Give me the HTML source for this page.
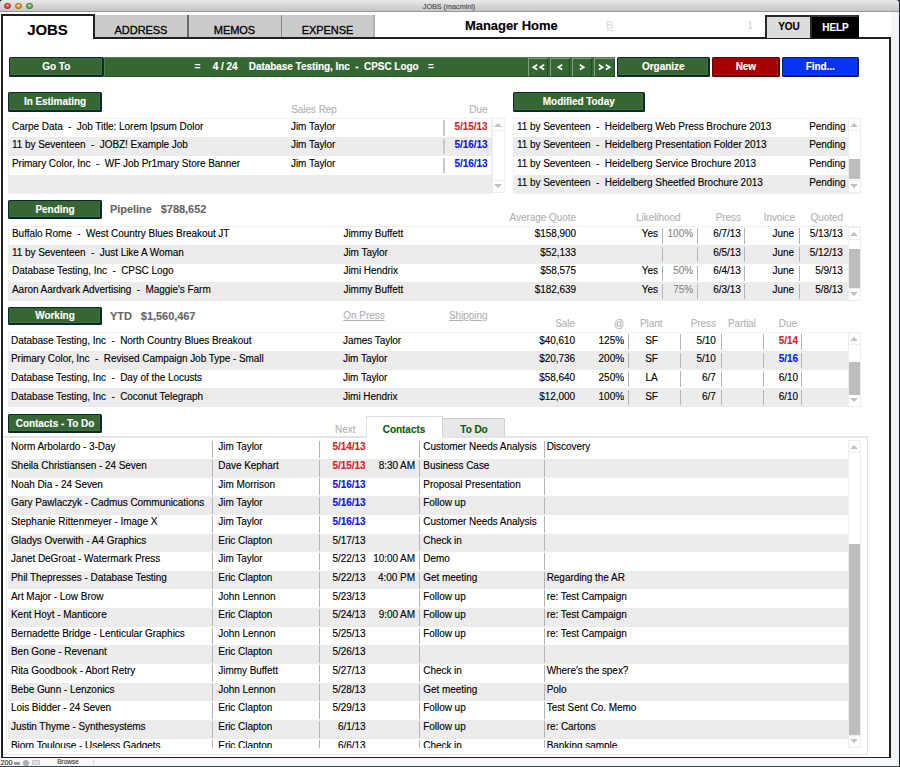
<!DOCTYPE html><html><head><meta charset="utf-8"><style>
html,body{margin:0;padding:0;}
body{width:900px;height:767px;position:relative;overflow:hidden;background:#fff;font-family:"Liberation Sans",sans-serif;}
.t{position:absolute;white-space:pre;-webkit-text-stroke:0.12px currentColor;letter-spacing:-0.05px;}
.r{position:absolute;}
</style></head><body>
<div class="r" style="left:0.00px;top:0.00px;width:900.00px;height:767.00px;background:#fff;"></div>
<div class="r" style="left:899.00px;top:0.00px;width:1.00px;height:767.00px;background:#0f2638;"></div>
<div class="r" style="left:891.00px;top:12.00px;width:8.00px;height:746.00px;background:#f4f4f4;"></div>
<div class="r" style="left:0.00px;top:0.00px;width:4.00px;height:4.00px;background:#1a2530;"></div>
<div class="r" style="left:895.00px;top:0.00px;width:4.00px;height:4.00px;background:#1a2530;"></div>
<div class="r" style="left:0.00px;top:0.00px;width:899.00px;height:11.30px;background:linear-gradient(#e9e9e9,#c6c6c6);border-radius:3px 3px 0 0;"></div>
<div class="r" style="left:0.00px;top:11.30px;width:899.00px;height:0.90px;background:#989898;"></div>
<div class="t" style="left:249.00px;width:400px;text-align:center;top:2.62px;font-size:7.3px;line-height:7.3px;font-weight:normal;color:#4a4a4a;">JOBS (macmini)</div>
<div class="r" style="left:4.30px;top:2.6px;width:6.8px;height:6.8px;border-radius:50%;box-sizing:border-box;border:0.7px solid #a8302a;background:radial-gradient(circle at 50% 30%,#ffb0a8 0,#e8453c 60%,#a8302a 100%);"></div>
<div class="r" style="left:15.30px;top:2.6px;width:6.8px;height:6.8px;border-radius:50%;box-sizing:border-box;border:0.7px solid #a86e14;background:radial-gradient(circle at 50% 30%,#ffe2a0 0,#e8a228 60%,#a86e14 100%);"></div>
<div class="r" style="left:26.30px;top:2.6px;width:6.8px;height:6.8px;border-radius:50%;box-sizing:border-box;border:0.7px solid #3a7a2a;background:radial-gradient(circle at 50% 30%,#c8f0b0 0,#5cb848 60%,#3a7a2a 100%);"></div>
<div class="r" style="left:0.00px;top:758.00px;width:899.00px;height:8.00px;background:#f7f7f7;"></div>
<div class="r" style="left:0.00px;top:766.00px;width:899.00px;height:1.00px;background:#3a4450;"></div>
<div class="t" style="left:0.50px;top:759.11px;font-size:7.2px;line-height:7.2px;font-weight:normal;color:#333;">200</div>
<div class="r" style="left:14.00px;top:762.00px;width:6.00px;height:2.50px;background:#999;border-radius:1px;"></div>
<div class="r" style="left:23px;top:760px;width:5.5px;height:5.5px;border-radius:50%;background:#b0b0b0;"></div>
<div class="r" style="left:32.00px;top:760.00px;width:8.00px;height:5.00px;background:#dcdcdc;border:1px solid #c8c8c8;box-sizing:border-box;"></div>
<div class="t" style="left:57.20px;top:759.41px;font-size:6.6px;line-height:6.6px;font-weight:normal;color:#3a3a3a;">Browse</div>
<div class="r" style="left:92.50px;top:759.00px;width:1.00px;height:7.00px;background:#dedede;"></div>
<div class="r" style="left:1.00px;top:14.00px;width:1.50px;height:744.20px;background:#202020;"></div>
<div class="r" style="left:1.00px;top:756.60px;width:890.00px;height:1.60px;background:#202020;"></div>
<div class="r" style="left:889.00px;top:37.00px;width:2.00px;height:721.20px;background:#202020;"></div>
<div class="r" style="left:93.00px;top:37.00px;width:798.00px;height:1.60px;background:#202020;"></div>
<div class="r" style="left:1.00px;top:14.00px;width:94.00px;height:1.50px;background:#202020;"></div>
<div class="r" style="left:93.00px;top:14.00px;width:2.00px;height:25.00px;background:#202020;"></div>
<div class="t" style="left:-152.50px;width:400px;text-align:center;top:22.30px;font-size:15px;line-height:15px;font-weight:bold;color:#000;">JOBS</div>
<div class="r" style="left:95.00px;top:14.50px;width:279.50px;height:22.50px;background:#cbcbcb;"></div>
<div class="r" style="left:187.00px;top:14.50px;width:1.50px;height:22.50px;background:#6a6a6a;"></div>
<div class="r" style="left:280.50px;top:14.50px;width:1.50px;height:22.50px;background:#8a8a8a;"></div>
<div class="r" style="left:373.00px;top:14.50px;width:1.50px;height:22.50px;background:#b0b0b0;"></div>
<div class="t" style="left:-59.00px;width:400px;text-align:center;top:24.89px;font-size:11px;line-height:11px;font-weight:normal;color:#000;-webkit-text-stroke:0.3px #000;">ADDRESS</div>
<div class="t" style="left:34.50px;width:400px;text-align:center;top:24.89px;font-size:11px;line-height:11px;font-weight:normal;color:#000;-webkit-text-stroke:0.3px #000;">MEMOS</div>
<div class="t" style="left:127.50px;width:400px;text-align:center;top:24.89px;font-size:11px;line-height:11px;font-weight:normal;color:#000;-webkit-text-stroke:0.3px #000;">EXPENSE</div>
<div class="t" style="left:465.00px;top:18.50px;font-size:13px;line-height:13px;font-weight:bold;color:#000;">Manager Home</div>
<div class="t" style="left:606.00px;top:20.19px;font-size:11px;line-height:11px;font-weight:normal;color:#dddddd;text-decoration:underline;">B</div>
<div class="t" style="left:747.00px;top:20.19px;font-size:11px;line-height:11px;font-weight:normal;color:#d8d8d8;">1</div>
<div class="r" style="left:765.00px;top:15.00px;width:47.00px;height:22.50px;background:#dcdcdc;border:2px solid #2a2a2a;border-bottom:none;box-sizing:border-box;"></div>
<div class="t" style="left:589.00px;width:400px;text-align:center;top:21.93px;font-size:10px;line-height:10px;font-weight:bold;color:#000;">YOU</div>
<div class="r" style="left:812.00px;top:15.00px;width:46.50px;height:22.50px;background:#000;border-top:2px solid #333;box-sizing:border-box;"></div>
<div class="t" style="left:635.50px;width:400px;text-align:center;top:22.54px;font-size:10px;line-height:10px;font-weight:bold;color:#fff;">HELP</div>
<div class="r" style="left:9.00px;top:57.00px;width:94.50px;height:19.50px;background:#356634;border-top:1px solid #0a2a2c;border-left:1px solid #0a2a2c;border-right:2px solid #0a2a2c;border-bottom:2px solid #0a2a2c;box-sizing:border-box;border-radius:1.5px;box-shadow:inset -1px -1px 0 rgba(255,255,255,0.07);"></div>
<div class="t" style="left:-143.75px;width:400px;text-align:center;top:61.88px;font-size:10px;line-height:10px;font-weight:bold;color:#fff;">Go To</div>
<div class="r" style="left:104.00px;top:57.00px;width:511.00px;height:19.50px;background:#356634;border-top:1px solid #4d7d4b;border-left:1px solid #4d7d4b;border-bottom:1px solid #2a5a2a;box-sizing:border-box;"></div>
<div class="t" style="left:194.50px;top:62.03px;font-size:10px;line-height:10px;font-weight:bold;color:#fff;">=</div>
<div class="t" style="left:212.70px;top:62.03px;font-size:10px;line-height:10px;font-weight:bold;color:#fff;">4 / 24</div>
<div class="t" style="left:248.80px;top:62.03px;font-size:10px;line-height:10px;font-weight:bold;color:#fff;">Database Testing, Inc  -  CPSC Logo</div>
<div class="t" style="left:428.00px;top:62.03px;font-size:10px;line-height:10px;font-weight:bold;color:#fff;">=</div>
<div class="r" style="left:528.00px;top:58.00px;width:20.00px;height:18.50px;background:#356634;border-top:1px solid #7e9e7d;border-left:1px solid #7e9e7d;border-right:1px solid #24482a;border-bottom:1px solid #24482a;box-sizing:border-box;"></div>
<svg class="r" style="left:532.20px;top:64.3px;" width="6" height="6.5" viewBox="0 0 6 6.5"><polyline points="5.2,0.8 1.2,3.2 5.2,5.6" fill="none" stroke="#fff" stroke-width="1.7" stroke-linejoin="miter" stroke-linecap="butt"/></svg>
<svg class="r" style="left:538.70px;top:64.3px;" width="6" height="6.5" viewBox="0 0 6 6.5"><polyline points="5.2,0.8 1.2,3.2 5.2,5.6" fill="none" stroke="#fff" stroke-width="1.7" stroke-linejoin="miter" stroke-linecap="butt"/></svg>
<div class="r" style="left:550.00px;top:58.00px;width:20.00px;height:18.50px;background:#356634;border-top:1px solid #7e9e7d;border-left:1px solid #7e9e7d;border-right:1px solid #24482a;border-bottom:1px solid #24482a;box-sizing:border-box;"></div>
<svg class="r" style="left:557.20px;top:64.3px;" width="6" height="6.5" viewBox="0 0 6 6.5"><polyline points="5.2,0.8 1.2,3.2 5.2,5.6" fill="none" stroke="#fff" stroke-width="1.7" stroke-linejoin="miter" stroke-linecap="butt"/></svg>
<div class="r" style="left:572.00px;top:58.00px;width:20.00px;height:18.50px;background:#356634;border-top:1px solid #7e9e7d;border-left:1px solid #7e9e7d;border-right:1px solid #24482a;border-bottom:1px solid #24482a;box-sizing:border-box;"></div>
<svg class="r" style="left:579.20px;top:64.3px;" width="6" height="6.5" viewBox="0 0 6 6.5"><polyline points="0.8,0.8 4.8,3.2 0.8,5.6" fill="none" stroke="#fff" stroke-width="1.7" stroke-linejoin="miter" stroke-linecap="butt"/></svg>
<div class="r" style="left:594.00px;top:58.00px;width:21.00px;height:18.50px;background:#356634;border-top:1px solid #7e9e7d;border-left:1px solid #7e9e7d;border-right:1px solid #24482a;border-bottom:1px solid #24482a;box-sizing:border-box;"></div>
<svg class="r" style="left:598.20px;top:64.3px;" width="6" height="6.5" viewBox="0 0 6 6.5"><polyline points="0.8,0.8 4.8,3.2 0.8,5.6" fill="none" stroke="#fff" stroke-width="1.7" stroke-linejoin="miter" stroke-linecap="butt"/></svg>
<svg class="r" style="left:604.70px;top:64.3px;" width="6" height="6.5" viewBox="0 0 6 6.5"><polyline points="0.8,0.8 4.8,3.2 0.8,5.6" fill="none" stroke="#fff" stroke-width="1.7" stroke-linejoin="miter" stroke-linecap="butt"/></svg>
<div class="r" style="left:617.00px;top:57.00px;width:92.50px;height:19.50px;background:#356634;border-top:1px solid #0a2a2c;border-left:1px solid #0a2a2c;border-right:2px solid #0a2a2c;border-bottom:2px solid #0a2a2c;box-sizing:border-box;border-radius:1.5px;box-shadow:inset -1px -1px 0 rgba(255,255,255,0.07);"></div>
<div class="t" style="left:463.25px;width:400px;text-align:center;top:61.88px;font-size:10px;line-height:10px;font-weight:bold;color:#fff;">Organize</div>
<div class="r" style="left:712.00px;top:57.00px;width:67.80px;height:19.50px;background:#a80000;border-top:1px solid #6a0000;border-left:1px solid #6a0000;border-right:2px solid #6a0000;border-bottom:2px solid #6a0000;box-sizing:border-box;border-radius:1.5px;box-shadow:inset -1px -1px 0 rgba(255,255,255,0.07);"></div>
<div class="t" style="left:545.90px;width:400px;text-align:center;top:61.88px;font-size:10px;line-height:10px;font-weight:bold;color:#fff;">New</div>
<div class="r" style="left:782.00px;top:57.00px;width:76.50px;height:19.50px;background:#0433f2;border-top:1px solid #0a1f6a;border-left:1px solid #0a1f6a;border-right:2px solid #0a1f6a;border-bottom:2px solid #0a1f6a;box-sizing:border-box;border-radius:1.5px;box-shadow:inset -1px -1px 0 rgba(255,255,255,0.07);"></div>
<div class="t" style="left:620.25px;width:400px;text-align:center;top:61.88px;font-size:10px;line-height:10px;font-weight:bold;color:#fff;">Find...</div>
<div class="r" style="left:8.00px;top:92.00px;width:94.00px;height:19.50px;background:#356634;border-top:1px solid #0a2a2c;border-left:1px solid #0a2a2c;border-right:2px solid #0a2a2c;border-bottom:2px solid #0a2a2c;box-sizing:border-box;border-radius:1.5px;box-shadow:inset -1px -1px 0 rgba(255,255,255,0.07);"></div>
<div class="t" style="left:-145.00px;width:400px;text-align:center;top:96.88px;font-size:10px;line-height:10px;font-weight:bold;color:#fff;">In Estimating</div>
<div class="t" style="left:291.20px;top:105.03px;font-size:10px;line-height:10px;font-weight:normal;color:#b2b2b2;">Sales Rep</div>
<div class="t" style="left:87.50px;width:400px;text-align:right;top:105.03px;font-size:10px;line-height:10px;font-weight:normal;color:#b2b2b2;">Due</div>
<div class="r" style="left:7.50px;top:117.70px;width:484.50px;height:76.20px;border:1px solid #f0f0f0;box-sizing:border-box;"></div>
<div class="r" style="left:8.00px;top:137.00px;width:483.50px;height:18.80px;background:#ececec;"></div>
<div class="r" style="left:8.00px;top:174.60px;width:483.50px;height:18.80px;background:#ececec;"></div>
<div class="r" style="left:443.30px;top:120.00px;width:1.40px;height:15.60px;background:#c8c8c8;"></div>
<div class="r" style="left:443.30px;top:138.80px;width:1.40px;height:15.60px;background:#c8c8c8;"></div>
<div class="r" style="left:443.30px;top:157.60px;width:1.40px;height:15.60px;background:#c8c8c8;"></div>
<div class="t" style="left:12.00px;top:121.53px;font-size:10px;line-height:10px;font-weight:normal;color:#000;">Carpe Data  -  Job Title: Lorem Ipsum Dolor</div>
<div class="t" style="left:291.00px;top:121.53px;font-size:10px;line-height:10px;font-weight:normal;color:#000;">Jim Taylor</div>
<div class="t" style="left:87.50px;width:400px;text-align:right;top:121.53px;font-size:10px;line-height:10px;font-weight:bold;color:#d02626;">5/15/13</div>
<div class="t" style="left:12.00px;top:140.34px;font-size:10px;line-height:10px;font-weight:normal;color:#000;">11 by Seventeen  -  JOBZ! Example Job</div>
<div class="t" style="left:291.00px;top:140.34px;font-size:10px;line-height:10px;font-weight:normal;color:#000;">Jim Taylor</div>
<div class="t" style="left:87.50px;width:400px;text-align:right;top:140.34px;font-size:10px;line-height:10px;font-weight:bold;color:#0a1ad6;">5/16/13</div>
<div class="t" style="left:12.00px;top:159.14px;font-size:10px;line-height:10px;font-weight:normal;color:#000;">Primary Color, Inc  -  WF Job Pr1mary Store Banner</div>
<div class="t" style="left:291.00px;top:159.14px;font-size:10px;line-height:10px;font-weight:normal;color:#000;">Jim Taylor</div>
<div class="t" style="left:87.50px;width:400px;text-align:right;top:159.14px;font-size:10px;line-height:10px;font-weight:bold;color:#0a1ad6;">5/16/13</div>
<div class="r" style="left:491.50px;top:118.20px;width:13.00px;height:75.20px;background:#fff;border:1px solid #ededed;box-sizing:border-box;"></div>
<div class="r" style="left:491.50px;top:118.20px;width:13.00px;height:13.00px;border-bottom:1px solid #ededed;box-sizing:border-box;"></div>
<div class="r" style="left:491.50px;top:180.40px;width:13.00px;height:13.00px;border-top:1px solid #ededed;box-sizing:border-box;"></div>
<div class="r" style="left:494.00px;top:123.20px;width:0;height:0;border-left:4px solid transparent;border-right:4px solid transparent;border-bottom:4px solid #c2c2c2;"></div>
<div class="r" style="left:494.00px;top:184.40px;width:0;height:0;border-left:4px solid transparent;border-right:4px solid transparent;border-top:4px solid #c2c2c2;"></div>
<div class="r" style="left:513.00px;top:92.00px;width:131.50px;height:19.50px;background:#356634;border-top:1px solid #0a2a2c;border-left:1px solid #0a2a2c;border-right:2px solid #0a2a2c;border-bottom:2px solid #0a2a2c;box-sizing:border-box;border-radius:1.5px;box-shadow:inset -1px -1px 0 rgba(255,255,255,0.07);"></div>
<div class="t" style="left:378.75px;width:400px;text-align:center;top:96.88px;font-size:10px;line-height:10px;font-weight:bold;color:#fff;">Modified Today</div>
<div class="r" style="left:512.50px;top:117.70px;width:348.00px;height:76.20px;border:1px solid #f0f0f0;box-sizing:border-box;"></div>
<div class="r" style="left:513.00px;top:137.00px;width:334.50px;height:18.80px;background:#ececec;"></div>
<div class="r" style="left:513.00px;top:174.60px;width:334.50px;height:18.80px;background:#ececec;"></div>
<div class="t" style="left:517.00px;top:121.53px;font-size:10px;line-height:10px;font-weight:normal;color:#000;">11 by Seventeen  -  Heidelberg Web Press Brochure 2013</div>
<div class="t" style="left:445.50px;width:400px;text-align:right;top:121.53px;font-size:10px;line-height:10px;font-weight:normal;color:#000;">Pending</div>
<div class="t" style="left:517.00px;top:140.34px;font-size:10px;line-height:10px;font-weight:normal;color:#000;">11 by Seventeen  -  Heidelberg Presentation Folder 2013</div>
<div class="t" style="left:445.50px;width:400px;text-align:right;top:140.34px;font-size:10px;line-height:10px;font-weight:normal;color:#000;">Pending</div>
<div class="t" style="left:517.00px;top:159.14px;font-size:10px;line-height:10px;font-weight:normal;color:#000;">11 by Seventeen  -  Heidelberg Service Brochure 2013</div>
<div class="t" style="left:445.50px;width:400px;text-align:right;top:159.14px;font-size:10px;line-height:10px;font-weight:normal;color:#000;">Pending</div>
<div class="t" style="left:517.00px;top:177.94px;font-size:10px;line-height:10px;font-weight:normal;color:#000;">11 by Seventeen  -  Heidelberg Sheetfed Brochure 2013</div>
<div class="t" style="left:445.50px;width:400px;text-align:right;top:177.94px;font-size:10px;line-height:10px;font-weight:normal;color:#000;">Pending</div>
<div class="r" style="left:848.00px;top:118.20px;width:12.50px;height:75.20px;background:#fff;border:1px solid #ededed;box-sizing:border-box;"></div>
<div class="r" style="left:848.00px;top:118.20px;width:12.50px;height:13.00px;border-bottom:1px solid #ededed;box-sizing:border-box;"></div>
<div class="r" style="left:848.00px;top:180.40px;width:12.50px;height:13.00px;border-top:1px solid #ededed;box-sizing:border-box;"></div>
<div class="r" style="left:850.25px;top:123.20px;width:0;height:0;border-left:4px solid transparent;border-right:4px solid transparent;border-bottom:4px solid #c2c2c2;"></div>
<div class="r" style="left:850.25px;top:184.40px;width:0;height:0;border-left:4px solid transparent;border-right:4px solid transparent;border-top:4px solid #c2c2c2;"></div>
<div class="r" style="left:849.00px;top:159.40px;width:10.50px;height:20.00px;background:#bdbdbd;"></div>
<div class="r" style="left:8.00px;top:199.80px;width:94.00px;height:19.20px;background:#356634;border-top:1px solid #0a2a2c;border-left:1px solid #0a2a2c;border-right:2px solid #0a2a2c;border-bottom:2px solid #0a2a2c;box-sizing:border-box;border-radius:1.5px;box-shadow:inset -1px -1px 0 rgba(255,255,255,0.07);"></div>
<div class="t" style="left:-145.00px;width:400px;text-align:center;top:204.53px;font-size:10px;line-height:10px;font-weight:bold;color:#fff;">Pending</div>
<div class="t" style="left:110.00px;top:204.09px;font-size:11px;line-height:11px;font-weight:bold;color:#666;">Pipeline   $788,652</div>
<div class="t" style="left:176.00px;width:400px;text-align:right;top:212.63px;font-size:10px;line-height:10px;font-weight:normal;color:#b2b2b2;">Average Quote</div>
<div class="t" style="left:636.00px;top:212.63px;font-size:10px;line-height:10px;font-weight:normal;color:#b2b2b2;">Likelihood</div>
<div class="t" style="left:341.00px;width:400px;text-align:right;top:212.63px;font-size:10px;line-height:10px;font-weight:normal;color:#b2b2b2;">Press</div>
<div class="t" style="left:395.00px;width:400px;text-align:right;top:212.63px;font-size:10px;line-height:10px;font-weight:normal;color:#b2b2b2;">Invoice</div>
<div class="t" style="left:443.00px;width:400px;text-align:right;top:212.63px;font-size:10px;line-height:10px;font-weight:normal;color:#b2b2b2;">Quoted</div>
<div class="r" style="left:7.50px;top:226.00px;width:853.00px;height:75.40px;border:1px solid #f0f0f0;box-sizing:border-box;"></div>
<div class="r" style="left:8.00px;top:245.10px;width:839.50px;height:18.60px;background:#ececec;"></div>
<div class="r" style="left:8.00px;top:282.30px;width:839.50px;height:18.60px;background:#ececec;"></div>
<div class="r" style="left:662.00px;top:228.30px;width:1.20px;height:15.40px;background:#b4b4b4;"></div>
<div class="r" style="left:662.00px;top:246.90px;width:1.20px;height:15.40px;background:#b4b4b4;"></div>
<div class="r" style="left:662.00px;top:265.50px;width:1.20px;height:15.40px;background:#b4b4b4;"></div>
<div class="r" style="left:662.00px;top:284.10px;width:1.20px;height:15.40px;background:#b4b4b4;"></div>
<div class="r" style="left:697.00px;top:228.30px;width:1.20px;height:15.40px;background:#b4b4b4;"></div>
<div class="r" style="left:697.00px;top:246.90px;width:1.20px;height:15.40px;background:#b4b4b4;"></div>
<div class="r" style="left:697.00px;top:265.50px;width:1.20px;height:15.40px;background:#b4b4b4;"></div>
<div class="r" style="left:697.00px;top:284.10px;width:1.20px;height:15.40px;background:#b4b4b4;"></div>
<div class="r" style="left:744.00px;top:228.30px;width:1.20px;height:15.40px;background:#b4b4b4;"></div>
<div class="r" style="left:744.00px;top:246.90px;width:1.20px;height:15.40px;background:#b4b4b4;"></div>
<div class="r" style="left:744.00px;top:265.50px;width:1.20px;height:15.40px;background:#b4b4b4;"></div>
<div class="r" style="left:744.00px;top:284.10px;width:1.20px;height:15.40px;background:#b4b4b4;"></div>
<div class="r" style="left:799.00px;top:228.30px;width:1.20px;height:15.40px;background:#b4b4b4;"></div>
<div class="r" style="left:799.00px;top:246.90px;width:1.20px;height:15.40px;background:#b4b4b4;"></div>
<div class="r" style="left:799.00px;top:265.50px;width:1.20px;height:15.40px;background:#b4b4b4;"></div>
<div class="r" style="left:799.00px;top:284.10px;width:1.20px;height:15.40px;background:#b4b4b4;"></div>
<div class="t" style="left:12.00px;top:229.03px;font-size:10px;line-height:10px;font-weight:normal;color:#000;">Buffalo Rome  -  West Country Blues Breakout JT</div>
<div class="t" style="left:343.50px;top:229.03px;font-size:10px;line-height:10px;font-weight:normal;color:#000;">Jimmy Buffett</div>
<div class="t" style="left:176.00px;width:400px;text-align:right;top:229.03px;font-size:10px;line-height:10px;font-weight:normal;color:#000;">$158,900</div>
<div class="t" style="left:258.00px;width:400px;text-align:right;top:229.03px;font-size:10px;line-height:10px;font-weight:normal;color:#000;">Yes</div>
<div class="t" style="left:293.00px;width:400px;text-align:right;top:229.03px;font-size:10px;line-height:10px;font-weight:normal;color:#888;">100%</div>
<div class="t" style="left:340.70px;width:400px;text-align:right;top:229.03px;font-size:10px;line-height:10px;font-weight:normal;color:#000;">6/7/13</div>
<div class="t" style="left:394.00px;width:400px;text-align:right;top:229.03px;font-size:10px;line-height:10px;font-weight:normal;color:#000;">June</div>
<div class="t" style="left:442.70px;width:400px;text-align:right;top:229.03px;font-size:10px;line-height:10px;font-weight:normal;color:#000;">5/13/13</div>
<div class="t" style="left:12.00px;top:247.64px;font-size:10px;line-height:10px;font-weight:normal;color:#000;">11 by Seventeen  -  Just Like A Woman</div>
<div class="t" style="left:343.50px;top:247.64px;font-size:10px;line-height:10px;font-weight:normal;color:#000;">Jim Taylor</div>
<div class="t" style="left:176.00px;width:400px;text-align:right;top:247.64px;font-size:10px;line-height:10px;font-weight:normal;color:#000;">$52,133</div>
<div class="t" style="left:258.00px;width:400px;text-align:right;top:247.64px;font-size:10px;line-height:10px;font-weight:normal;color:#000;"></div>
<div class="t" style="left:293.00px;width:400px;text-align:right;top:247.64px;font-size:10px;line-height:10px;font-weight:normal;color:#888;"></div>
<div class="t" style="left:340.70px;width:400px;text-align:right;top:247.64px;font-size:10px;line-height:10px;font-weight:normal;color:#000;">6/5/13</div>
<div class="t" style="left:394.00px;width:400px;text-align:right;top:247.64px;font-size:10px;line-height:10px;font-weight:normal;color:#000;">June</div>
<div class="t" style="left:442.70px;width:400px;text-align:right;top:247.64px;font-size:10px;line-height:10px;font-weight:normal;color:#000;">5/12/13</div>
<div class="t" style="left:12.00px;top:266.24px;font-size:10px;line-height:10px;font-weight:normal;color:#000;">Database Testing, Inc  -  CPSC Logo</div>
<div class="t" style="left:343.50px;top:266.24px;font-size:10px;line-height:10px;font-weight:normal;color:#000;">Jimi Hendrix</div>
<div class="t" style="left:176.00px;width:400px;text-align:right;top:266.24px;font-size:10px;line-height:10px;font-weight:normal;color:#000;">$58,575</div>
<div class="t" style="left:258.00px;width:400px;text-align:right;top:266.24px;font-size:10px;line-height:10px;font-weight:normal;color:#000;">Yes</div>
<div class="t" style="left:293.00px;width:400px;text-align:right;top:266.24px;font-size:10px;line-height:10px;font-weight:normal;color:#888;">50%</div>
<div class="t" style="left:340.70px;width:400px;text-align:right;top:266.24px;font-size:10px;line-height:10px;font-weight:normal;color:#000;">6/4/13</div>
<div class="t" style="left:394.00px;width:400px;text-align:right;top:266.24px;font-size:10px;line-height:10px;font-weight:normal;color:#000;">June</div>
<div class="t" style="left:442.70px;width:400px;text-align:right;top:266.24px;font-size:10px;line-height:10px;font-weight:normal;color:#000;">5/9/13</div>
<div class="t" style="left:12.00px;top:284.84px;font-size:10px;line-height:10px;font-weight:normal;color:#000;">Aaron Aardvark Advertising  -  Maggie&#x27;s Farm</div>
<div class="t" style="left:343.50px;top:284.84px;font-size:10px;line-height:10px;font-weight:normal;color:#000;">Jimmy Buffett</div>
<div class="t" style="left:176.00px;width:400px;text-align:right;top:284.84px;font-size:10px;line-height:10px;font-weight:normal;color:#000;">$182,639</div>
<div class="t" style="left:258.00px;width:400px;text-align:right;top:284.84px;font-size:10px;line-height:10px;font-weight:normal;color:#000;">Yes</div>
<div class="t" style="left:293.00px;width:400px;text-align:right;top:284.84px;font-size:10px;line-height:10px;font-weight:normal;color:#888;">75%</div>
<div class="t" style="left:340.70px;width:400px;text-align:right;top:284.84px;font-size:10px;line-height:10px;font-weight:normal;color:#000;">6/3/13</div>
<div class="t" style="left:394.00px;width:400px;text-align:right;top:284.84px;font-size:10px;line-height:10px;font-weight:normal;color:#000;">June</div>
<div class="t" style="left:442.70px;width:400px;text-align:right;top:284.84px;font-size:10px;line-height:10px;font-weight:normal;color:#000;">5/8/13</div>
<div class="r" style="left:848.00px;top:226.50px;width:12.50px;height:74.40px;background:#fff;border:1px solid #ededed;box-sizing:border-box;"></div>
<div class="r" style="left:848.00px;top:226.50px;width:12.50px;height:13.00px;border-bottom:1px solid #ededed;box-sizing:border-box;"></div>
<div class="r" style="left:848.00px;top:287.90px;width:12.50px;height:13.00px;border-top:1px solid #ededed;box-sizing:border-box;"></div>
<div class="r" style="left:850.25px;top:231.50px;width:0;height:0;border-left:4px solid transparent;border-right:4px solid transparent;border-bottom:4px solid #c2c2c2;"></div>
<div class="r" style="left:850.25px;top:291.90px;width:0;height:0;border-left:4px solid transparent;border-right:4px solid transparent;border-top:4px solid #c2c2c2;"></div>
<div class="r" style="left:849.00px;top:249.00px;width:10.50px;height:39.00px;background:#bdbdbd;"></div>
<div class="r" style="left:8.00px;top:306.50px;width:94.00px;height:18.70px;background:#356634;border-top:1px solid #0a2a2c;border-left:1px solid #0a2a2c;border-right:2px solid #0a2a2c;border-bottom:2px solid #0a2a2c;box-sizing:border-box;border-radius:1.5px;box-shadow:inset -1px -1px 0 rgba(255,255,255,0.07);"></div>
<div class="t" style="left:-145.00px;width:400px;text-align:center;top:310.99px;font-size:10px;line-height:10px;font-weight:bold;color:#fff;">Working</div>
<div class="t" style="left:110.00px;top:310.99px;font-size:11px;line-height:11px;font-weight:bold;color:#666;">YTD   $1,560,467</div>
<div class="t" style="left:343.30px;top:310.84px;font-size:10px;line-height:10px;font-weight:normal;color:#b2b2b2;text-decoration:underline;">On Press</div>
<div class="t" style="left:449.00px;top:310.84px;font-size:10px;line-height:10px;font-weight:normal;color:#b2b2b2;text-decoration:underline;">Shipping</div>
<div class="t" style="left:175.00px;width:400px;text-align:right;top:319.04px;font-size:10px;line-height:10px;font-weight:normal;color:#b2b2b2;">Sale</div>
<div class="t" style="left:224.00px;width:400px;text-align:right;top:319.04px;font-size:10px;line-height:10px;font-weight:normal;color:#b2b2b2;">@</div>
<div class="t" style="left:640.00px;top:319.04px;font-size:10px;line-height:10px;font-weight:normal;color:#b2b2b2;">Plant</div>
<div class="t" style="left:316.00px;width:400px;text-align:right;top:319.04px;font-size:10px;line-height:10px;font-weight:normal;color:#b2b2b2;">Press</div>
<div class="t" style="left:728.00px;top:319.04px;font-size:10px;line-height:10px;font-weight:normal;color:#b2b2b2;">Partial</div>
<div class="t" style="left:397.00px;width:400px;text-align:right;top:319.04px;font-size:10px;line-height:10px;font-weight:normal;color:#b2b2b2;">Due</div>
<div class="r" style="left:7.50px;top:331.90px;width:853.00px;height:75.40px;border:1px solid #f0f0f0;box-sizing:border-box;"></div>
<div class="r" style="left:8.00px;top:351.00px;width:839.50px;height:18.60px;background:#ececec;"></div>
<div class="r" style="left:8.00px;top:388.20px;width:839.50px;height:18.60px;background:#ececec;"></div>
<div class="r" style="left:628.00px;top:334.20px;width:1.20px;height:15.40px;background:#b4b4b4;"></div>
<div class="r" style="left:628.00px;top:352.80px;width:1.20px;height:15.40px;background:#b4b4b4;"></div>
<div class="r" style="left:628.00px;top:371.40px;width:1.20px;height:15.40px;background:#b4b4b4;"></div>
<div class="r" style="left:628.00px;top:390.00px;width:1.20px;height:15.40px;background:#b4b4b4;"></div>
<div class="r" style="left:680.00px;top:334.20px;width:1.20px;height:15.40px;background:#b4b4b4;"></div>
<div class="r" style="left:680.00px;top:352.80px;width:1.20px;height:15.40px;background:#b4b4b4;"></div>
<div class="r" style="left:680.00px;top:371.40px;width:1.20px;height:15.40px;background:#b4b4b4;"></div>
<div class="r" style="left:680.00px;top:390.00px;width:1.20px;height:15.40px;background:#b4b4b4;"></div>
<div class="r" style="left:720.50px;top:334.20px;width:1.20px;height:15.40px;background:#b4b4b4;"></div>
<div class="r" style="left:720.50px;top:352.80px;width:1.20px;height:15.40px;background:#b4b4b4;"></div>
<div class="r" style="left:720.50px;top:371.40px;width:1.20px;height:15.40px;background:#b4b4b4;"></div>
<div class="r" style="left:720.50px;top:390.00px;width:1.20px;height:15.40px;background:#b4b4b4;"></div>
<div class="r" style="left:762.50px;top:334.20px;width:1.20px;height:15.40px;background:#b4b4b4;"></div>
<div class="r" style="left:762.50px;top:352.80px;width:1.20px;height:15.40px;background:#b4b4b4;"></div>
<div class="r" style="left:762.50px;top:371.40px;width:1.20px;height:15.40px;background:#b4b4b4;"></div>
<div class="r" style="left:762.50px;top:390.00px;width:1.20px;height:15.40px;background:#b4b4b4;"></div>
<div class="r" style="left:800.50px;top:334.20px;width:1.20px;height:15.40px;background:#b4b4b4;"></div>
<div class="r" style="left:800.50px;top:352.80px;width:1.20px;height:15.40px;background:#b4b4b4;"></div>
<div class="r" style="left:800.50px;top:371.40px;width:1.20px;height:15.40px;background:#b4b4b4;"></div>
<div class="r" style="left:800.50px;top:390.00px;width:1.20px;height:15.40px;background:#b4b4b4;"></div>
<div class="t" style="left:11.00px;top:335.74px;font-size:10px;line-height:10px;font-weight:normal;color:#000;">Database Testing, Inc  -  North Country Blues Breakout</div>
<div class="t" style="left:343.00px;top:335.74px;font-size:10px;line-height:10px;font-weight:normal;color:#000;">James Taylor</div>
<div class="t" style="left:175.00px;width:400px;text-align:right;top:335.74px;font-size:10px;line-height:10px;font-weight:normal;color:#000;">$40,610</div>
<div class="t" style="left:224.00px;width:400px;text-align:right;top:335.74px;font-size:10px;line-height:10px;font-weight:normal;color:#000;">125%</div>
<div class="t" style="left:451.50px;width:400px;text-align:center;top:335.74px;font-size:10px;line-height:10px;font-weight:normal;color:#000;">SF</div>
<div class="t" style="left:315.70px;width:400px;text-align:right;top:335.74px;font-size:10px;line-height:10px;font-weight:normal;color:#000;">5/10</div>
<div class="t" style="left:398.00px;width:400px;text-align:right;top:335.74px;font-size:10px;line-height:10px;font-weight:bold;color:#d02626;">5/14</div>
<div class="t" style="left:11.00px;top:354.34px;font-size:10px;line-height:10px;font-weight:normal;color:#000;">Primary Color, Inc  -  Revised Campaign Job Type - Small</div>
<div class="t" style="left:343.00px;top:354.34px;font-size:10px;line-height:10px;font-weight:normal;color:#000;">Jim Taylor</div>
<div class="t" style="left:175.00px;width:400px;text-align:right;top:354.34px;font-size:10px;line-height:10px;font-weight:normal;color:#000;">$20,736</div>
<div class="t" style="left:224.00px;width:400px;text-align:right;top:354.34px;font-size:10px;line-height:10px;font-weight:normal;color:#000;">200%</div>
<div class="t" style="left:451.50px;width:400px;text-align:center;top:354.34px;font-size:10px;line-height:10px;font-weight:normal;color:#000;">SF</div>
<div class="t" style="left:315.70px;width:400px;text-align:right;top:354.34px;font-size:10px;line-height:10px;font-weight:normal;color:#000;">5/10</div>
<div class="t" style="left:398.00px;width:400px;text-align:right;top:354.34px;font-size:10px;line-height:10px;font-weight:bold;color:#0a1ad6;">5/16</div>
<div class="t" style="left:11.00px;top:372.94px;font-size:10px;line-height:10px;font-weight:normal;color:#000;">Database Testing, Inc  -  Day of the Locusts</div>
<div class="t" style="left:343.00px;top:372.94px;font-size:10px;line-height:10px;font-weight:normal;color:#000;">Jim Taylor</div>
<div class="t" style="left:175.00px;width:400px;text-align:right;top:372.94px;font-size:10px;line-height:10px;font-weight:normal;color:#000;">$58,640</div>
<div class="t" style="left:224.00px;width:400px;text-align:right;top:372.94px;font-size:10px;line-height:10px;font-weight:normal;color:#000;">250%</div>
<div class="t" style="left:451.50px;width:400px;text-align:center;top:372.94px;font-size:10px;line-height:10px;font-weight:normal;color:#000;">LA</div>
<div class="t" style="left:315.70px;width:400px;text-align:right;top:372.94px;font-size:10px;line-height:10px;font-weight:normal;color:#000;">6/7</div>
<div class="t" style="left:398.00px;width:400px;text-align:right;top:372.94px;font-size:10px;line-height:10px;font-weight:normal;color:#000;">6/10</div>
<div class="t" style="left:11.00px;top:391.54px;font-size:10px;line-height:10px;font-weight:normal;color:#000;">Database Testing, Inc  -  Coconut Telegraph</div>
<div class="t" style="left:343.00px;top:391.54px;font-size:10px;line-height:10px;font-weight:normal;color:#000;">Jimi Hendrix</div>
<div class="t" style="left:175.00px;width:400px;text-align:right;top:391.54px;font-size:10px;line-height:10px;font-weight:normal;color:#000;">$12,000</div>
<div class="t" style="left:224.00px;width:400px;text-align:right;top:391.54px;font-size:10px;line-height:10px;font-weight:normal;color:#000;">100%</div>
<div class="t" style="left:451.50px;width:400px;text-align:center;top:391.54px;font-size:10px;line-height:10px;font-weight:normal;color:#000;">SF</div>
<div class="t" style="left:315.70px;width:400px;text-align:right;top:391.54px;font-size:10px;line-height:10px;font-weight:normal;color:#000;">6/7</div>
<div class="t" style="left:398.00px;width:400px;text-align:right;top:391.54px;font-size:10px;line-height:10px;font-weight:normal;color:#000;">6/10</div>
<div class="r" style="left:848.00px;top:332.40px;width:12.50px;height:74.40px;background:#fff;border:1px solid #ededed;box-sizing:border-box;"></div>
<div class="r" style="left:848.00px;top:332.40px;width:12.50px;height:13.00px;border-bottom:1px solid #ededed;box-sizing:border-box;"></div>
<div class="r" style="left:848.00px;top:393.80px;width:12.50px;height:13.00px;border-top:1px solid #ededed;box-sizing:border-box;"></div>
<div class="r" style="left:850.25px;top:337.40px;width:0;height:0;border-left:4px solid transparent;border-right:4px solid transparent;border-bottom:4px solid #c2c2c2;"></div>
<div class="r" style="left:850.25px;top:397.80px;width:0;height:0;border-left:4px solid transparent;border-right:4px solid transparent;border-top:4px solid #c2c2c2;"></div>
<div class="r" style="left:849.00px;top:361.70px;width:10.50px;height:33.30px;background:#bdbdbd;"></div>
<div class="r" style="left:8.00px;top:414.00px;width:94.00px;height:19.00px;background:#356634;border-top:1px solid #0a2a2c;border-left:1px solid #0a2a2c;border-right:2px solid #0a2a2c;border-bottom:2px solid #0a2a2c;box-sizing:border-box;border-radius:1.5px;box-shadow:inset -1px -1px 0 rgba(255,255,255,0.07);"></div>
<div class="t" style="left:-145.00px;width:400px;text-align:center;top:418.64px;font-size:10px;line-height:10px;font-weight:bold;color:#fff;">Contacts - To Do</div>
<div class="t" style="left:335.00px;top:424.64px;font-size:10px;line-height:10px;font-weight:normal;color:#b0b0b0;">Next</div>
<div class="r" style="left:365.50px;top:415.70px;width:77.00px;height:21.80px;background:#fff;border:1px solid #dcdcdc;border-bottom:none;box-sizing:border-box;"></div>
<div class="r" style="left:442.00px;top:418.30px;width:63.00px;height:18.70px;background:#e8e8e8;border:1px solid #d0d0d0;border-bottom:none;box-sizing:border-box;"></div>
<div class="t" style="left:204.00px;width:400px;text-align:center;top:424.64px;font-size:10px;line-height:10px;font-weight:bold;color:#0b5a0e;">Contacts</div>
<div class="t" style="left:274.00px;width:400px;text-align:center;top:424.64px;font-size:10px;line-height:10px;font-weight:bold;color:#0b5a0e;">To Do</div>
<div class="r" style="left:4.00px;top:436.00px;width:864.00px;height:2.00px;background:#e4e4e4;"></div>
<div class="r" style="left:6.00px;top:439.50px;width:862.00px;height:315.50px;border:1px solid #ececec;border-top:none;border-bottom:none;box-sizing:border-box;"></div>
<div class="r" style="left:866.50px;top:436.00px;width:1.50px;height:319.00px;background:#e4e4e4;"></div>
<div class="r" style="left:366.50px;top:435.00px;width:75.50px;height:4.00px;background:#fff;"></div>
<div class="r" style="left:8.00px;top:458.95px;width:839.50px;height:18.65px;background:#ececec;"></div>
<div class="r" style="left:8.00px;top:496.25px;width:839.50px;height:18.65px;background:#ececec;"></div>
<div class="r" style="left:8.00px;top:533.55px;width:839.50px;height:18.65px;background:#ececec;"></div>
<div class="r" style="left:8.00px;top:570.85px;width:839.50px;height:18.65px;background:#ececec;"></div>
<div class="r" style="left:8.00px;top:608.15px;width:839.50px;height:18.65px;background:#ececec;"></div>
<div class="r" style="left:8.00px;top:645.45px;width:839.50px;height:18.65px;background:#ececec;"></div>
<div class="r" style="left:8.00px;top:682.75px;width:839.50px;height:18.65px;background:#ececec;"></div>
<div class="r" style="left:8.00px;top:720.05px;width:839.50px;height:18.65px;background:#ececec;"></div>
<div class="r" style="left:212.30px;top:441.10px;width:1.20px;height:17.05px;background:#b4b4b4;"></div>
<div class="r" style="left:212.30px;top:459.75px;width:1.20px;height:17.05px;background:#b4b4b4;"></div>
<div class="r" style="left:212.30px;top:478.40px;width:1.20px;height:17.05px;background:#b4b4b4;"></div>
<div class="r" style="left:212.30px;top:497.05px;width:1.20px;height:17.05px;background:#b4b4b4;"></div>
<div class="r" style="left:212.30px;top:515.70px;width:1.20px;height:17.05px;background:#b4b4b4;"></div>
<div class="r" style="left:212.30px;top:534.35px;width:1.20px;height:17.05px;background:#b4b4b4;"></div>
<div class="r" style="left:212.30px;top:553.00px;width:1.20px;height:17.05px;background:#b4b4b4;"></div>
<div class="r" style="left:212.30px;top:571.65px;width:1.20px;height:17.05px;background:#b4b4b4;"></div>
<div class="r" style="left:212.30px;top:590.30px;width:1.20px;height:17.05px;background:#b4b4b4;"></div>
<div class="r" style="left:212.30px;top:608.95px;width:1.20px;height:17.05px;background:#b4b4b4;"></div>
<div class="r" style="left:212.30px;top:627.60px;width:1.20px;height:17.05px;background:#b4b4b4;"></div>
<div class="r" style="left:212.30px;top:646.25px;width:1.20px;height:17.05px;background:#b4b4b4;"></div>
<div class="r" style="left:212.30px;top:664.90px;width:1.20px;height:17.05px;background:#b4b4b4;"></div>
<div class="r" style="left:212.30px;top:683.55px;width:1.20px;height:17.05px;background:#b4b4b4;"></div>
<div class="r" style="left:212.30px;top:702.20px;width:1.20px;height:17.05px;background:#b4b4b4;"></div>
<div class="r" style="left:212.30px;top:720.85px;width:1.20px;height:17.05px;background:#b4b4b4;"></div>
<div class="r" style="left:212.30px;top:739.50px;width:1.20px;height:17.05px;background:#b4b4b4;"></div>
<div class="r" style="left:319.30px;top:441.10px;width:1.20px;height:17.05px;background:#b4b4b4;"></div>
<div class="r" style="left:319.30px;top:459.75px;width:1.20px;height:17.05px;background:#b4b4b4;"></div>
<div class="r" style="left:319.30px;top:478.40px;width:1.20px;height:17.05px;background:#b4b4b4;"></div>
<div class="r" style="left:319.30px;top:497.05px;width:1.20px;height:17.05px;background:#b4b4b4;"></div>
<div class="r" style="left:319.30px;top:515.70px;width:1.20px;height:17.05px;background:#b4b4b4;"></div>
<div class="r" style="left:319.30px;top:534.35px;width:1.20px;height:17.05px;background:#b4b4b4;"></div>
<div class="r" style="left:319.30px;top:553.00px;width:1.20px;height:17.05px;background:#b4b4b4;"></div>
<div class="r" style="left:319.30px;top:571.65px;width:1.20px;height:17.05px;background:#b4b4b4;"></div>
<div class="r" style="left:319.30px;top:590.30px;width:1.20px;height:17.05px;background:#b4b4b4;"></div>
<div class="r" style="left:319.30px;top:608.95px;width:1.20px;height:17.05px;background:#b4b4b4;"></div>
<div class="r" style="left:319.30px;top:627.60px;width:1.20px;height:17.05px;background:#b4b4b4;"></div>
<div class="r" style="left:319.30px;top:646.25px;width:1.20px;height:17.05px;background:#b4b4b4;"></div>
<div class="r" style="left:319.30px;top:664.90px;width:1.20px;height:17.05px;background:#b4b4b4;"></div>
<div class="r" style="left:319.30px;top:683.55px;width:1.20px;height:17.05px;background:#b4b4b4;"></div>
<div class="r" style="left:319.30px;top:702.20px;width:1.20px;height:17.05px;background:#b4b4b4;"></div>
<div class="r" style="left:319.30px;top:720.85px;width:1.20px;height:17.05px;background:#b4b4b4;"></div>
<div class="r" style="left:319.30px;top:739.50px;width:1.20px;height:17.05px;background:#b4b4b4;"></div>
<div class="r" style="left:419.30px;top:441.10px;width:1.20px;height:17.05px;background:#b4b4b4;"></div>
<div class="r" style="left:419.30px;top:459.75px;width:1.20px;height:17.05px;background:#b4b4b4;"></div>
<div class="r" style="left:419.30px;top:478.40px;width:1.20px;height:17.05px;background:#b4b4b4;"></div>
<div class="r" style="left:419.30px;top:497.05px;width:1.20px;height:17.05px;background:#b4b4b4;"></div>
<div class="r" style="left:419.30px;top:515.70px;width:1.20px;height:17.05px;background:#b4b4b4;"></div>
<div class="r" style="left:419.30px;top:534.35px;width:1.20px;height:17.05px;background:#b4b4b4;"></div>
<div class="r" style="left:419.30px;top:553.00px;width:1.20px;height:17.05px;background:#b4b4b4;"></div>
<div class="r" style="left:419.30px;top:571.65px;width:1.20px;height:17.05px;background:#b4b4b4;"></div>
<div class="r" style="left:419.30px;top:590.30px;width:1.20px;height:17.05px;background:#b4b4b4;"></div>
<div class="r" style="left:419.30px;top:608.95px;width:1.20px;height:17.05px;background:#b4b4b4;"></div>
<div class="r" style="left:419.30px;top:627.60px;width:1.20px;height:17.05px;background:#b4b4b4;"></div>
<div class="r" style="left:419.30px;top:646.25px;width:1.20px;height:17.05px;background:#b4b4b4;"></div>
<div class="r" style="left:419.30px;top:664.90px;width:1.20px;height:17.05px;background:#b4b4b4;"></div>
<div class="r" style="left:419.30px;top:683.55px;width:1.20px;height:17.05px;background:#b4b4b4;"></div>
<div class="r" style="left:419.30px;top:702.20px;width:1.20px;height:17.05px;background:#b4b4b4;"></div>
<div class="r" style="left:419.30px;top:720.85px;width:1.20px;height:17.05px;background:#b4b4b4;"></div>
<div class="r" style="left:419.30px;top:739.50px;width:1.20px;height:17.05px;background:#b4b4b4;"></div>
<div class="r" style="left:544.00px;top:441.10px;width:1.20px;height:17.05px;background:#b4b4b4;"></div>
<div class="r" style="left:544.00px;top:459.75px;width:1.20px;height:17.05px;background:#b4b4b4;"></div>
<div class="r" style="left:544.00px;top:478.40px;width:1.20px;height:17.05px;background:#b4b4b4;"></div>
<div class="r" style="left:544.00px;top:497.05px;width:1.20px;height:17.05px;background:#b4b4b4;"></div>
<div class="r" style="left:544.00px;top:515.70px;width:1.20px;height:17.05px;background:#b4b4b4;"></div>
<div class="r" style="left:544.00px;top:534.35px;width:1.20px;height:17.05px;background:#b4b4b4;"></div>
<div class="r" style="left:544.00px;top:553.00px;width:1.20px;height:17.05px;background:#b4b4b4;"></div>
<div class="r" style="left:544.00px;top:571.65px;width:1.20px;height:17.05px;background:#b4b4b4;"></div>
<div class="r" style="left:544.00px;top:590.30px;width:1.20px;height:17.05px;background:#b4b4b4;"></div>
<div class="r" style="left:544.00px;top:608.95px;width:1.20px;height:17.05px;background:#b4b4b4;"></div>
<div class="r" style="left:544.00px;top:627.60px;width:1.20px;height:17.05px;background:#b4b4b4;"></div>
<div class="r" style="left:544.00px;top:646.25px;width:1.20px;height:17.05px;background:#b4b4b4;"></div>
<div class="r" style="left:544.00px;top:664.90px;width:1.20px;height:17.05px;background:#b4b4b4;"></div>
<div class="r" style="left:544.00px;top:683.55px;width:1.20px;height:17.05px;background:#b4b4b4;"></div>
<div class="r" style="left:544.00px;top:702.20px;width:1.20px;height:17.05px;background:#b4b4b4;"></div>
<div class="r" style="left:544.00px;top:720.85px;width:1.20px;height:17.05px;background:#b4b4b4;"></div>
<div class="r" style="left:544.00px;top:739.50px;width:1.20px;height:17.05px;background:#b4b4b4;"></div>
<div class="t" style="left:11.00px;top:442.34px;font-size:10px;line-height:10px;font-weight:normal;color:#000;">Norm Arbolardo - 3-Day</div>
<div class="t" style="left:218.30px;top:442.34px;font-size:10px;line-height:10px;font-weight:normal;color:#000;">Jim Taylor</div>
<div class="t" style="left:-34.50px;width:400px;text-align:right;top:442.34px;font-size:10px;line-height:10px;font-weight:bold;color:#d02626;">5/14/13</div>
<div class="t" style="left:15.00px;width:400px;text-align:right;top:442.34px;font-size:10px;line-height:10px;font-weight:normal;color:#000;"></div>
<div class="t" style="left:423.30px;top:442.34px;font-size:10px;line-height:10px;font-weight:normal;color:#000;">Customer Needs Analysis</div>
<div class="t" style="left:546.70px;top:442.34px;font-size:10px;line-height:10px;font-weight:normal;color:#000;">Discovery</div>
<div class="t" style="left:11.00px;top:460.99px;font-size:10px;line-height:10px;font-weight:normal;color:#000;">Sheila Christiansen - 24 Seven</div>
<div class="t" style="left:218.30px;top:460.99px;font-size:10px;line-height:10px;font-weight:normal;color:#000;">Dave Kephart</div>
<div class="t" style="left:-34.50px;width:400px;text-align:right;top:460.99px;font-size:10px;line-height:10px;font-weight:bold;color:#d02626;">5/15/13</div>
<div class="t" style="left:15.00px;width:400px;text-align:right;top:460.99px;font-size:10px;line-height:10px;font-weight:normal;color:#000;">8:30 AM</div>
<div class="t" style="left:423.30px;top:460.99px;font-size:10px;line-height:10px;font-weight:normal;color:#000;">Business Case</div>
<div class="t" style="left:546.70px;top:460.99px;font-size:10px;line-height:10px;font-weight:normal;color:#000;"></div>
<div class="t" style="left:11.00px;top:479.64px;font-size:10px;line-height:10px;font-weight:normal;color:#000;">Noah Dia - 24 Seven</div>
<div class="t" style="left:218.30px;top:479.64px;font-size:10px;line-height:10px;font-weight:normal;color:#000;">Jim Morrison</div>
<div class="t" style="left:-34.50px;width:400px;text-align:right;top:479.64px;font-size:10px;line-height:10px;font-weight:bold;color:#0a1ad6;">5/16/13</div>
<div class="t" style="left:15.00px;width:400px;text-align:right;top:479.64px;font-size:10px;line-height:10px;font-weight:normal;color:#000;"></div>
<div class="t" style="left:423.30px;top:479.64px;font-size:10px;line-height:10px;font-weight:normal;color:#000;">Proposal Presentation</div>
<div class="t" style="left:546.70px;top:479.64px;font-size:10px;line-height:10px;font-weight:normal;color:#000;"></div>
<div class="t" style="left:11.00px;top:498.29px;font-size:10px;line-height:10px;font-weight:normal;color:#000;">Gary Pawlaczyk - Cadmus Communications</div>
<div class="t" style="left:218.30px;top:498.29px;font-size:10px;line-height:10px;font-weight:normal;color:#000;">Jim Taylor</div>
<div class="t" style="left:-34.50px;width:400px;text-align:right;top:498.29px;font-size:10px;line-height:10px;font-weight:bold;color:#0a1ad6;">5/16/13</div>
<div class="t" style="left:15.00px;width:400px;text-align:right;top:498.29px;font-size:10px;line-height:10px;font-weight:normal;color:#000;"></div>
<div class="t" style="left:423.30px;top:498.29px;font-size:10px;line-height:10px;font-weight:normal;color:#000;">Follow up</div>
<div class="t" style="left:546.70px;top:498.29px;font-size:10px;line-height:10px;font-weight:normal;color:#000;"></div>
<div class="t" style="left:11.00px;top:516.93px;font-size:10px;line-height:10px;font-weight:normal;color:#000;">Stephanie Rittenmeyer - Image X</div>
<div class="t" style="left:218.30px;top:516.93px;font-size:10px;line-height:10px;font-weight:normal;color:#000;">Jim Taylor</div>
<div class="t" style="left:-34.50px;width:400px;text-align:right;top:516.93px;font-size:10px;line-height:10px;font-weight:bold;color:#0a1ad6;">5/16/13</div>
<div class="t" style="left:15.00px;width:400px;text-align:right;top:516.93px;font-size:10px;line-height:10px;font-weight:normal;color:#000;"></div>
<div class="t" style="left:423.30px;top:516.93px;font-size:10px;line-height:10px;font-weight:normal;color:#000;">Customer Needs Analysis</div>
<div class="t" style="left:546.70px;top:516.93px;font-size:10px;line-height:10px;font-weight:normal;color:#000;"></div>
<div class="t" style="left:11.00px;top:535.58px;font-size:10px;line-height:10px;font-weight:normal;color:#000;">Gladys Overwith - A4 Graphics</div>
<div class="t" style="left:218.30px;top:535.58px;font-size:10px;line-height:10px;font-weight:normal;color:#000;">Eric Clapton</div>
<div class="t" style="left:-34.50px;width:400px;text-align:right;top:535.58px;font-size:10px;line-height:10px;font-weight:normal;color:#000;">5/17/13</div>
<div class="t" style="left:15.00px;width:400px;text-align:right;top:535.58px;font-size:10px;line-height:10px;font-weight:normal;color:#000;"></div>
<div class="t" style="left:423.30px;top:535.58px;font-size:10px;line-height:10px;font-weight:normal;color:#000;">Check in</div>
<div class="t" style="left:546.70px;top:535.58px;font-size:10px;line-height:10px;font-weight:normal;color:#000;"></div>
<div class="t" style="left:11.00px;top:554.24px;font-size:10px;line-height:10px;font-weight:normal;color:#000;">Janet DeGroat - Watermark Press</div>
<div class="t" style="left:218.30px;top:554.24px;font-size:10px;line-height:10px;font-weight:normal;color:#000;">Jim Taylor</div>
<div class="t" style="left:-34.50px;width:400px;text-align:right;top:554.24px;font-size:10px;line-height:10px;font-weight:normal;color:#000;">5/22/13</div>
<div class="t" style="left:15.00px;width:400px;text-align:right;top:554.24px;font-size:10px;line-height:10px;font-weight:normal;color:#000;">10:00 AM</div>
<div class="t" style="left:423.30px;top:554.24px;font-size:10px;line-height:10px;font-weight:normal;color:#000;">Demo</div>
<div class="t" style="left:546.70px;top:554.24px;font-size:10px;line-height:10px;font-weight:normal;color:#000;"></div>
<div class="t" style="left:11.00px;top:572.88px;font-size:10px;line-height:10px;font-weight:normal;color:#000;">Phil Thepresses - Database Testing</div>
<div class="t" style="left:218.30px;top:572.88px;font-size:10px;line-height:10px;font-weight:normal;color:#000;">Eric Clapton</div>
<div class="t" style="left:-34.50px;width:400px;text-align:right;top:572.88px;font-size:10px;line-height:10px;font-weight:normal;color:#000;">5/22/13</div>
<div class="t" style="left:15.00px;width:400px;text-align:right;top:572.88px;font-size:10px;line-height:10px;font-weight:normal;color:#000;">4:00 PM</div>
<div class="t" style="left:423.30px;top:572.88px;font-size:10px;line-height:10px;font-weight:normal;color:#000;">Get meeting</div>
<div class="t" style="left:546.70px;top:572.88px;font-size:10px;line-height:10px;font-weight:normal;color:#000;">Regarding the AR</div>
<div class="t" style="left:11.00px;top:591.53px;font-size:10px;line-height:10px;font-weight:normal;color:#000;">Art Major - Low Brow</div>
<div class="t" style="left:218.30px;top:591.53px;font-size:10px;line-height:10px;font-weight:normal;color:#000;">John Lennon</div>
<div class="t" style="left:-34.50px;width:400px;text-align:right;top:591.53px;font-size:10px;line-height:10px;font-weight:normal;color:#000;">5/23/13</div>
<div class="t" style="left:15.00px;width:400px;text-align:right;top:591.53px;font-size:10px;line-height:10px;font-weight:normal;color:#000;"></div>
<div class="t" style="left:423.30px;top:591.53px;font-size:10px;line-height:10px;font-weight:normal;color:#000;">Follow up</div>
<div class="t" style="left:546.70px;top:591.53px;font-size:10px;line-height:10px;font-weight:normal;color:#000;">re: Test Campaign</div>
<div class="t" style="left:11.00px;top:610.18px;font-size:10px;line-height:10px;font-weight:normal;color:#000;">Kent Hoyt - Manticore</div>
<div class="t" style="left:218.30px;top:610.18px;font-size:10px;line-height:10px;font-weight:normal;color:#000;">Eric Clapton</div>
<div class="t" style="left:-34.50px;width:400px;text-align:right;top:610.18px;font-size:10px;line-height:10px;font-weight:normal;color:#000;">5/24/13</div>
<div class="t" style="left:15.00px;width:400px;text-align:right;top:610.18px;font-size:10px;line-height:10px;font-weight:normal;color:#000;">9:00 AM</div>
<div class="t" style="left:423.30px;top:610.18px;font-size:10px;line-height:10px;font-weight:normal;color:#000;">Follow up</div>
<div class="t" style="left:546.70px;top:610.18px;font-size:10px;line-height:10px;font-weight:normal;color:#000;">re: Test Campaign</div>
<div class="t" style="left:11.00px;top:628.83px;font-size:10px;line-height:10px;font-weight:normal;color:#000;">Bernadette Bridge - Lenticular Graphics</div>
<div class="t" style="left:218.30px;top:628.83px;font-size:10px;line-height:10px;font-weight:normal;color:#000;">John Lennon</div>
<div class="t" style="left:-34.50px;width:400px;text-align:right;top:628.83px;font-size:10px;line-height:10px;font-weight:normal;color:#000;">5/25/13</div>
<div class="t" style="left:15.00px;width:400px;text-align:right;top:628.83px;font-size:10px;line-height:10px;font-weight:normal;color:#000;"></div>
<div class="t" style="left:423.30px;top:628.83px;font-size:10px;line-height:10px;font-weight:normal;color:#000;">Follow up</div>
<div class="t" style="left:546.70px;top:628.83px;font-size:10px;line-height:10px;font-weight:normal;color:#000;">re: Test Campaign</div>
<div class="t" style="left:11.00px;top:647.49px;font-size:10px;line-height:10px;font-weight:normal;color:#000;">Ben Gone - Revenant</div>
<div class="t" style="left:218.30px;top:647.49px;font-size:10px;line-height:10px;font-weight:normal;color:#000;">Eric Clapton</div>
<div class="t" style="left:-34.50px;width:400px;text-align:right;top:647.49px;font-size:10px;line-height:10px;font-weight:normal;color:#000;">5/26/13</div>
<div class="t" style="left:15.00px;width:400px;text-align:right;top:647.49px;font-size:10px;line-height:10px;font-weight:normal;color:#000;"></div>
<div class="t" style="left:423.30px;top:647.49px;font-size:10px;line-height:10px;font-weight:normal;color:#000;"></div>
<div class="t" style="left:546.70px;top:647.49px;font-size:10px;line-height:10px;font-weight:normal;color:#000;"></div>
<div class="t" style="left:11.00px;top:666.13px;font-size:10px;line-height:10px;font-weight:normal;color:#000;">Rita Goodbook - Abort Retry</div>
<div class="t" style="left:218.30px;top:666.13px;font-size:10px;line-height:10px;font-weight:normal;color:#000;">Jimmy Buffett</div>
<div class="t" style="left:-34.50px;width:400px;text-align:right;top:666.13px;font-size:10px;line-height:10px;font-weight:normal;color:#000;">5/27/13</div>
<div class="t" style="left:15.00px;width:400px;text-align:right;top:666.13px;font-size:10px;line-height:10px;font-weight:normal;color:#000;"></div>
<div class="t" style="left:423.30px;top:666.13px;font-size:10px;line-height:10px;font-weight:normal;color:#000;">Check in</div>
<div class="t" style="left:546.70px;top:666.13px;font-size:10px;line-height:10px;font-weight:normal;color:#000;">Where&#x27;s the spex?</div>
<div class="t" style="left:11.00px;top:684.78px;font-size:10px;line-height:10px;font-weight:normal;color:#000;">Bebe Gunn - Lenzonics</div>
<div class="t" style="left:218.30px;top:684.78px;font-size:10px;line-height:10px;font-weight:normal;color:#000;">John Lennon</div>
<div class="t" style="left:-34.50px;width:400px;text-align:right;top:684.78px;font-size:10px;line-height:10px;font-weight:normal;color:#000;">5/28/13</div>
<div class="t" style="left:15.00px;width:400px;text-align:right;top:684.78px;font-size:10px;line-height:10px;font-weight:normal;color:#000;"></div>
<div class="t" style="left:423.30px;top:684.78px;font-size:10px;line-height:10px;font-weight:normal;color:#000;">Get meeting</div>
<div class="t" style="left:546.70px;top:684.78px;font-size:10px;line-height:10px;font-weight:normal;color:#000;">Polo</div>
<div class="t" style="left:11.00px;top:703.43px;font-size:10px;line-height:10px;font-weight:normal;color:#000;">Lois Bidder - 24 Seven</div>
<div class="t" style="left:218.30px;top:703.43px;font-size:10px;line-height:10px;font-weight:normal;color:#000;">Eric Clapton</div>
<div class="t" style="left:-34.50px;width:400px;text-align:right;top:703.43px;font-size:10px;line-height:10px;font-weight:normal;color:#000;">5/29/13</div>
<div class="t" style="left:15.00px;width:400px;text-align:right;top:703.43px;font-size:10px;line-height:10px;font-weight:normal;color:#000;"></div>
<div class="t" style="left:423.30px;top:703.43px;font-size:10px;line-height:10px;font-weight:normal;color:#000;">Follow up</div>
<div class="t" style="left:546.70px;top:703.43px;font-size:10px;line-height:10px;font-weight:normal;color:#000;">Test Sent Co. Memo</div>
<div class="t" style="left:11.00px;top:722.08px;font-size:10px;line-height:10px;font-weight:normal;color:#000;">Justin Thyme - Synthesystems</div>
<div class="t" style="left:218.30px;top:722.08px;font-size:10px;line-height:10px;font-weight:normal;color:#000;">Eric Clapton</div>
<div class="t" style="left:-34.50px;width:400px;text-align:right;top:722.08px;font-size:10px;line-height:10px;font-weight:normal;color:#000;">6/1/13</div>
<div class="t" style="left:15.00px;width:400px;text-align:right;top:722.08px;font-size:10px;line-height:10px;font-weight:normal;color:#000;"></div>
<div class="t" style="left:423.30px;top:722.08px;font-size:10px;line-height:10px;font-weight:normal;color:#000;">Follow up</div>
<div class="t" style="left:546.70px;top:722.08px;font-size:10px;line-height:10px;font-weight:normal;color:#000;">re: Cartons</div>
<div class="t" style="left:11.00px;top:740.74px;font-size:10px;line-height:10px;font-weight:normal;color:#000;">Biorn Toulouse - Useless Gadgets</div>
<div class="t" style="left:218.30px;top:740.74px;font-size:10px;line-height:10px;font-weight:normal;color:#000;">Eric Clapton</div>
<div class="t" style="left:-34.50px;width:400px;text-align:right;top:740.74px;font-size:10px;line-height:10px;font-weight:normal;color:#000;">6/6/13</div>
<div class="t" style="left:15.00px;width:400px;text-align:right;top:740.74px;font-size:10px;line-height:10px;font-weight:normal;color:#000;"></div>
<div class="t" style="left:423.30px;top:740.74px;font-size:10px;line-height:10px;font-weight:normal;color:#000;">Check in</div>
<div class="t" style="left:546.70px;top:740.74px;font-size:10px;line-height:10px;font-weight:normal;color:#000;">Banking sample</div>
<div class="r" style="left:3.00px;top:748.20px;width:863.50px;height:8.40px;background:#fff;"></div>
<div class="r" style="left:4.00px;top:753.50px;width:864.00px;height:1.70px;background:#e4e4e4;"></div>
<div class="r" style="left:848.00px;top:440.30px;width:12.50px;height:307.90px;background:#fff;border:1px solid #ededed;box-sizing:border-box;"></div>
<div class="r" style="left:848.00px;top:440.30px;width:12.50px;height:13.00px;border-bottom:1px solid #ededed;box-sizing:border-box;"></div>
<div class="r" style="left:848.00px;top:735.20px;width:12.50px;height:13.00px;border-top:1px solid #ededed;box-sizing:border-box;"></div>
<div class="r" style="left:850.25px;top:445.30px;width:0;height:0;border-left:4px solid transparent;border-right:4px solid transparent;border-bottom:4px solid #c2c2c2;"></div>
<div class="r" style="left:850.25px;top:739.20px;width:0;height:0;border-left:4px solid transparent;border-right:4px solid transparent;border-top:4px solid #c2c2c2;"></div>
<div class="r" style="left:849.00px;top:544.40px;width:10.50px;height:190.30px;background:#bdbdbd;"></div>
</body></html>
